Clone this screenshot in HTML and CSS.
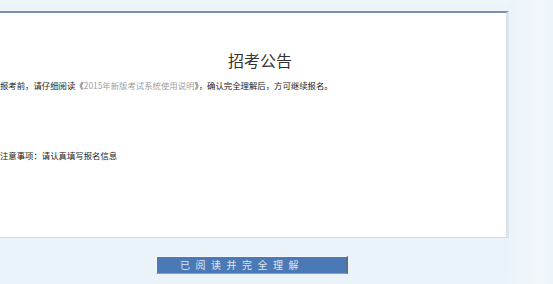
FILE: index.html
```html
<!DOCTYPE html>
<html lang="zh-CN">
<head>
    <meta charset="UTF-8">
    <title>招考公告</title>
    <link rel="stylesheet" href="styles.css">
</head>
<body>
    <div class="page">
        <!-- Notice panel -->
        <div class="notice">
            <h2>招考公告</h2>
            <p class="intro">报考前，请仔细阅读《<span class="doc-link">2015年新版考试系统使用说明</span>》，确认完全理解后，方可继续报名。</p>
            <p class="tips">注意事项：请认真填写报名信息</p>
        </div>

        <!-- Confirm button -->
        <div class="actions">
            <button class="confirm-btn">已阅读并完全理解</button>
        </div>
    </div>
</body>
</html>
```

FILE: styles.css
```css
html, body {
    margin: 0;
    height: 100%;
}
body {
    font-family: "Noto Sans CJK SC", "Noto Sans", sans-serif;
    background: linear-gradient(to right, #eaf2fa 0, #eaf2fa 500px, #f1f7fb 540px, #eef5fa 100%);
    overflow: hidden;
}
.page {
    padding-top: 11px;
    width: 509px;
    background: linear-gradient(to bottom, #eef8fb 0, #eaf3f9 11px);
}
.notice {
    background: #fff;
    border-top: 2px solid #7a8fae;
    border-right: 3px solid #dde4ec;
    border-bottom: 1px solid #cfdae4;
    padding-top: 38px;
    box-sizing: border-box;
    height: 227px;
}
.notice h2 {
    margin: 0 0 0 228px;
    font-size: 16px;
    line-height: 18px;
    font-weight: normal;
    color: #333;
}
.notice p {
    margin: 0;
    font-size: 8.4px;
    line-height: 12px;
    color: #1a1a1a;
    white-space: nowrap;
}
.intro {
    padding-top: 10px;
}
.doc-link {
    color: #a0a0a0;
}
.tips {
    padding-top: 58px;
}
.actions {
    padding: 18px 0 0 156px;
}
.confirm-btn {
    display: block;
    width: 192px;
    height: 18px;
    padding: 0 0 0 23px;
    background: #4b79b6;
    border: 1px solid #f4f8fc;
    border-right: 2px solid #5c6e86;
    border-bottom: 1px solid #8aa0bc;
    color: #dde7f4;
    font-family: "Noto Sans CJK SC", sans-serif;
    font-size: 10px;
    line-height: 16px;
    letter-spacing: 5.5px;
    text-align: left;
}
```
